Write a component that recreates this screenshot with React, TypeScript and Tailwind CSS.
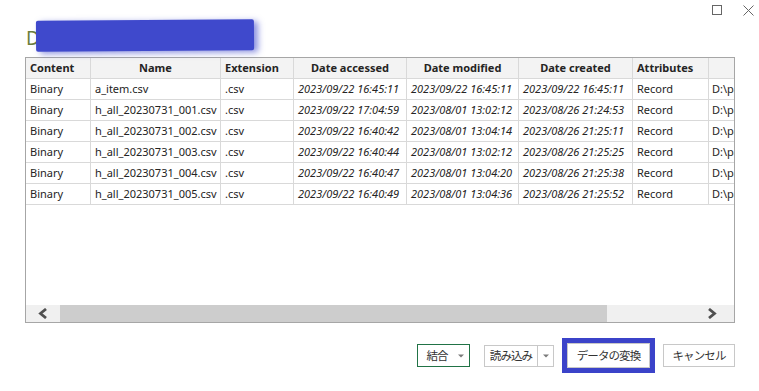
const columns = [
  { label: "Content", width: "w-[65px]", align: "text-left" },
  { label: "Name", width: "w-[130px]", align: "text-center" },
  { label: "Extension", width: "w-[73px]", align: "text-left" },
  { label: "Date accessed", width: "w-[113px]", align: "text-center" },
  { label: "Date modified", width: "w-[112px]", align: "text-center" },
  { label: "Date created", width: "w-[114px]", align: "text-center" },
  { label: "Attributes", width: "w-[76px]", align: "text-left" },
];

const rows = [
  ["a_item.csv", "2023/09/22 16:45:11", "2023/09/22 16:45:11", "2023/09/22 16:45:11"],
  ["h_all_20230731_001.csv", "2023/09/22 17:04:59", "2023/08/01 13:02:12", "2023/08/26 21:24:53"],
  ["h_all_20230731_002.csv", "2023/09/22 16:40:42", "2023/08/01 13:04:14", "2023/08/26 21:25:11"],
  ["h_all_20230731_003.csv", "2023/09/22 16:40:44", "2023/08/01 13:02:12", "2023/08/26 21:25:25"],
  ["h_all_20230731_004.csv", "2023/09/22 16:40:47", "2023/08/01 13:04:20", "2023/08/26 21:25:38"],
  ["h_all_20230731_005.csv", "2023/09/22 16:40:49", "2023/08/01 13:04:36", "2023/08/26 21:25:52"],
];

const cell = "shrink-0 border-r border-[#d9d9d9] px-[4px] leading-[20px] whitespace-nowrap overflow-hidden";

function Caret() {
  return (
    <svg width="6" height="4" viewBox="0 0 6 4" className="text-[#7a7a7a]">
      <path d="M0 0.5 H6 L3 3.5 Z" fill="currentColor" />
    </svg>
  );
}

function Chevron({ dir }: { dir: "left" | "right" }) {
  return (
    <svg width="10" height="11" viewBox="0 0 10 11" className="text-[#505050]">
      <path
        d={dir === "left" ? "M8 1 L2.5 5.5 L8 10" : "M2 1 L7.5 5.5 L2 10"}
        fill="none"
        stroke="currentColor"
        strokeWidth="2.8"
      />
    </svg>
  );
}

export default function App() {
  return (
    <div
      className="flex h-[391px] w-[759px] flex-col bg-white text-[11px] text-[#252423]"
      style={{ fontFamily: '"Noto Sans", "Noto Sans CJK JP", sans-serif' }}
    >
      {/* window controls */}
      <div className="flex h-[20px] items-start justify-end gap-[21px] pr-[5px] pt-[5px]">
        <div className="h-[10px] w-[10px] border border-[#666]" />
        <svg width="11" height="11" viewBox="0 0 11 11" className="text-[#666]">
          <path d="M0.5 0.5 L10.5 10.5 M10.5 0.5 L0.5 10.5" stroke="currentColor" strokeWidth="1" />
        </svg>
      </div>

      {/* title (redacted) */}
      <div className="relative ml-[25px] h-[37px]">
        <span className="absolute left-[1px] top-[6px] text-[19px] leading-[24px] text-[#6b7d3c]">D</span>
        <div className="absolute left-[11px] top-[0px] h-[31px] w-[218px] -rotate-[0.4deg] rounded-[2px] bg-[#3f49cc] shadow-[4px_2px_6px_rgba(63,73,204,0.6)]" />
      </div>

      {/* table */}
      <div className="ml-[25px] flex h-[266px] w-[710px] flex-col overflow-hidden border border-[#a6a6a6]">
        <div className="flex h-[21px] shrink-0 border-b border-[#d9d9d9] bg-[#f3f3f3] font-bold">
          {columns.map((c) => (
            <div key={c.label} className={`${cell} ${c.width} ${c.align}`}>
              {c.label}
            </div>
          ))}
          <div className="flex-1" />
        </div>
        {rows.map((r) => (
          <div key={r[0]} className="flex h-[21px] shrink-0 border-b border-[#d9d9d9]">
            <div className={`${cell} w-[65px]`}>Binary</div>
            <div className={`${cell} w-[130px]`}>{r[0]}</div>
            <div className={`${cell} w-[73px]`}>.csv</div>
            <div className={`${cell} w-[113px] italic`}>{r[1]}</div>
            <div className={`${cell} w-[112px] italic`}>{r[2]}</div>
            <div className={`${cell} w-[114px] italic`}>{r[3]}</div>
            <div className={`${cell} w-[76px]`}>Record</div>
            <div className="flex-1 overflow-hidden whitespace-nowrap px-[3px] leading-[20px]">D:\paths</div>
          </div>
        ))}
        <div className="flex-1" />
        <div className="flex h-[17px] shrink-0 items-stretch bg-[#f0f0f0]">
          <div className="flex w-[34px] items-center justify-center">
            <Chevron dir="left" />
          </div>
          <div className="w-[547px] bg-[#cdcdcd]" />
          <div className="flex flex-1 items-center justify-end pr-[17px]">
            <Chevron dir="right" />
          </div>
        </div>
      </div>

      {/* buttons */}
      <div
        className="mt-[15px] flex items-center pr-[24px] text-[11.5px] tracking-[-0.9px] text-[#333]"
        style={{ fontFamily: '"Noto Sans CJK JP", sans-serif' }}
      >
        <div className="ml-auto flex h-[23px] w-[53px] items-center justify-center gap-[10px] border border-[#217346] pl-[3px]">
          <span>結合</span>
          <Caret />
        </div>
        <div className="ml-[14px] flex h-[22px] w-[70px] items-stretch border border-[#c8c8c8]">
          <div className="flex w-[53px] items-center justify-center border-r border-[#c8c8c8]">読み込み</div>
          <div className="flex flex-1 items-center justify-center">
            <Caret />
          </div>
        </div>
        <div className="ml-[8px] border-[5px] border-[#3b43c9]">
          <div className="flex h-[25px] w-[83px] items-center justify-center border border-[#c8c8c8]">データの変換</div>
        </div>
        <div className="ml-[8px] flex h-[23px] w-[72px] items-center justify-center border border-[#c8c8c8]">キャンセル</div>
      </div>
    </div>
  );
}
